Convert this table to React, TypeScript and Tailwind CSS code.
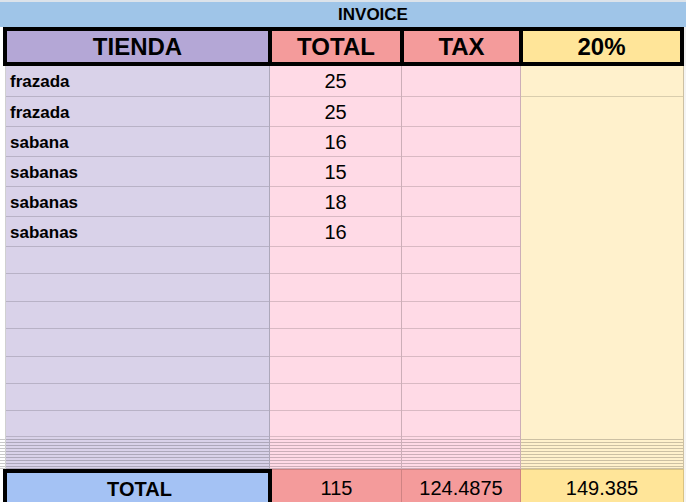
const items = [
  { name: "frazada", total: 25 },
  { name: "frazada", total: 25 },
  { name: "sabana", total: 16 },
  { name: "sabanas", total: 15 },
  { name: "sabanas", total: 18 },
  { name: "sabanas", total: 16 },
];

// empty sheet rows between the items and the collapsed rows
const emptyRows = [27, 28, 27, 28, 27, 27, 26];
const hiddenRows = Array.from({ length: 11 });

function EmptyCells() {
  return (
    <>
      {emptyRows.map((h, i) => (
        <div key={i} className="border-b border-black/15" style={{ height: h }} />
      ))}
    </>
  );
}

function DenseLines({ line }: { line: string }) {
  return (
    <>
      {hiddenRows.map((_, i) => (
        <div key={i} className={`border-b ${line} ${i === 10 ? "h-[2px]" : "h-[3px]"}`} />
      ))}
    </>
  );
}

export default function App() {
  return (
    <div className="h-[502px] w-[686px] overflow-hidden bg-white font-['Liberation_Sans',Arial,sans-serif] text-black">
      {/* title bar */}
      <div className="flex h-[27px] items-center justify-center border-t-2 border-[#dce3ea] bg-[#9fc5e8] pl-[60px] text-[17px] font-bold">
        INVOICE
      </div>

      {/* header */}
      <div className="flex h-[39px]">
        <div className="w-[3px]" />
        <div className="flex w-[681px] gap-[4px] bg-black p-[4px] text-[24px] font-bold">
          <div className="flex w-[261px] items-center justify-center bg-[#b4a7d6]">TIENDA</div>
          <div className="flex w-[128px] items-center justify-center bg-[#f49b9b]">TOTAL</div>
          <div className="flex w-[115px] items-center justify-center bg-[#f49b9b]">TAX</div>
          <div className="flex w-[157px] items-center justify-center bg-[#ffe599]">20%</div>
        </div>
        <div className="w-[2px] bg-[#eeeeee]" />
      </div>

      {/* body */}
      <div className="flex">
        <div className="flex w-[6px] flex-col border-r border-[#d0d0d0]">
          <div className="h-[371px]" />
          <DenseLines line="border-[#c8c8c8]" />
        </div>

        <div className="flex w-[264px] flex-col border-r border-black/20 bg-[#d9d2e9]">
          {items.map((it, i) => (
            <div
              key={i}
              className={`flex items-center border-b border-black/15 pl-[4px] pt-[2px] text-[17px] font-bold ${i === 0 ? "h-[31px]" : "h-[30px]"}`}
            >
              {it.name}
            </div>
          ))}
          <EmptyCells />
          <DenseLines line="border-black/20" />
        </div>

        <div className="flex w-[132px] flex-col border-r border-black/20 bg-[#ffdae6]">
          {items.map((it, i) => (
            <div
              key={i}
              className={`flex items-center justify-center border-b border-black/15 text-[20px] ${i === 0 ? "h-[31px]" : "h-[30px]"}`}
            >
              {it.total}
            </div>
          ))}
          <EmptyCells />
          <DenseLines line="border-black/20" />
        </div>

        <div className="flex w-[119px] flex-col border-r border-black/20 bg-[#ffdae6]">
          {items.map((_, i) => (
            <div key={i} className={`border-b border-black/15 ${i === 0 ? "h-[31px]" : "h-[30px]"}`} />
          ))}
          <EmptyCells />
          <DenseLines line="border-black/20" />
        </div>

        <div className="flex w-[163px] flex-col border-r border-black/20 bg-[#fff1cc]">
          <div className="h-[31px] border-b border-black/15" />
          <div className="h-[340px]" />
          <DenseLines line="border-black/20" />
        </div>

        <div className="w-[2px] bg-[#f4f4f4]" />
      </div>

      {/* totals */}
      <div className="flex h-[36px]">
        <div className="w-[3px]" />
        <div className="flex w-[269px] items-center justify-center border-x-4 border-t-4 border-black bg-[#a4c2f4] pl-[4px] text-[20px] font-bold">
          TOTAL
        </div>
        <div className="flex w-[130px] items-center justify-center border-r border-t border-black/15 bg-[#f49b9b] text-[20px]">
          115
        </div>
        <div className="flex w-[119px] items-center justify-center border-r border-t border-black/15 bg-[#f49b9b] text-[20px]">
          124.4875
        </div>
        <div className="flex w-[163px] items-center justify-center border-r border-t border-black/15 bg-[#ffe599] text-[20px]">
          149.385
        </div>
        <div className="w-[2px] bg-[#f4f4f4]" />
      </div>
    </div>
  );
}
